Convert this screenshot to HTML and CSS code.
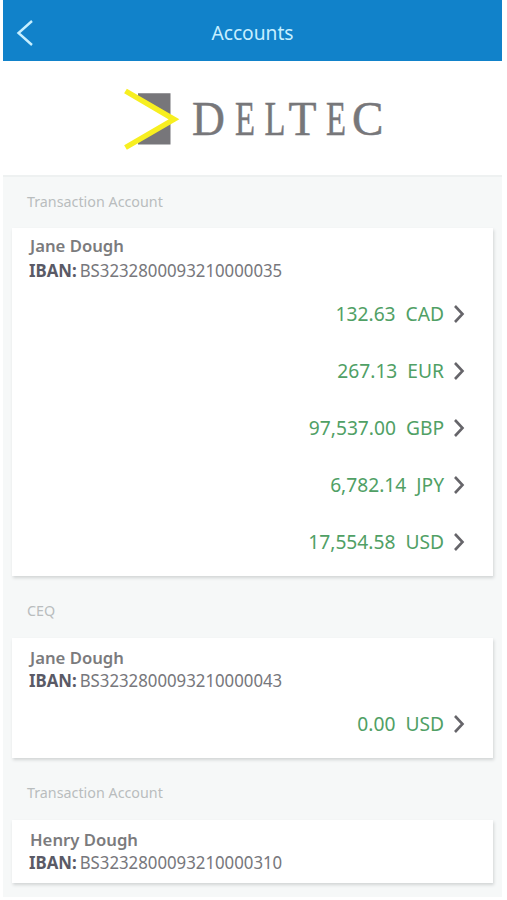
FILE: index.html
```html
<!DOCTYPE html>
<html lang="en">
<head>
<meta charset="utf-8">
<title>Accounts</title>
<link rel="stylesheet" href="styles.css">
</head>
<body>
<div class="app">
  <header class="bar">
    <svg class="back" viewBox="0 0 18 28"><path d="M16 2 2.5 14 16 26"/></svg>
    <h1 class="title">Accounts</h1>
  </header>
  <div class="brand">
    <svg class="logo" width="262" height="64" viewBox="0 0 262 64">
      <path class="mark-box" d="M14 5.3H46.5V29.3L14 10ZM14 56.5H46.5V33.3L14 52Z"/>
      <path class="mark-arrow" d="M1.5 3 50 31.3 1.5 59.5"/>
      <text class="wordmark" y="47.5" transform="scale(.7 1)"><tspan x="97" textLength="47" lengthAdjust="spacingAndGlyphs">D</tspan><tspan x="158.6" textLength="28.6" lengthAdjust="spacingAndGlyphs">E</tspan><tspan x="200.7" textLength="30" lengthAdjust="spacingAndGlyphs">L</tspan><tspan x="235" textLength="40" lengthAdjust="spacingAndGlyphs">T</tspan><tspan x="288.5" textLength="28.6" lengthAdjust="spacingAndGlyphs">E</tspan><tspan x="325.7" textLength="45" lengthAdjust="spacingAndGlyphs">C</tspan></text>
    </svg>
  </div>
  <main class="content">
    <h2 class="group">Transaction Account</h2>
    <section class="card card-first">
      <h3 class="name">Jane Dough</h3>
      <p class="iban"><b>IBAN:</b><span>BS3232800093210000035</span></p>
      <ul class="balances">
        <li><span>132.63</span><span>CAD</span><svg class="chev" viewBox="0 0 12 20"><path d="m2 2 7.5 8L2 18"/></svg></li>
        <li><span>267.13</span><span>EUR</span><svg class="chev" viewBox="0 0 12 20"><path d="m2 2 7.5 8L2 18"/></svg></li>
        <li><span>97,537.00</span><span>GBP</span><svg class="chev" viewBox="0 0 12 20"><path d="m2 2 7.5 8L2 18"/></svg></li>
        <li><span>6,782.14</span><span>JPY</span><svg class="chev" viewBox="0 0 12 20"><path d="m2 2 7.5 8L2 18"/></svg></li>
        <li><span>17,554.58</span><span>USD</span><svg class="chev" viewBox="0 0 12 20"><path d="m2 2 7.5 8L2 18"/></svg></li>
      </ul>
    </section>
    <h2 class="group">CEQ</h2>
    <section class="card">
      <h3 class="name">Jane Dough</h3>
      <p class="iban"><b>IBAN:</b><span>BS3232800093210000043</span></p>
      <ul class="balances">
        <li><span>0.00</span><span>USD</span><svg class="chev" viewBox="0 0 12 20"><path d="m2 2 7.5 8L2 18"/></svg></li>
      </ul>
    </section>
    <h2 class="group">Transaction Account</h2>
    <section class="card">
      <h3 class="name">Henry Dough</h3>
      <p class="iban"><b>IBAN:</b><span>BS3232800093210000310</span></p>
    </section>
  </main>
</div>
</body>
</html>
```
FILE: styles.css
```css
* { box-sizing: border-box; margin: 0; padding: 0; }
body { background: #fff; font-family: "Noto Sans", "Open Sans", sans-serif; }
svg { display: block; fill: none; }
.app { width: 499px; height: 897px; margin-left: 3px; background: #f6f8f8; overflow: hidden; }
.bar { display: grid; grid-template-columns: 60px 1fr 60px; align-items: center; height: 61px; padding-top: 5px; background: #1182ca; }
.back { width: 18px; height: 28px; margin-left: 13px; stroke: #c6efff; stroke-width: 2.4; }
.title { text-align: center; color: #c6efff; font-size: 19.2px; font-weight: 400; line-height: 28px; transform: scaleY(1.07); }
.brand { height: 114px; padding: 27px 0 0 121px; background: #fff; }
.mark-box { fill: #77767a; }
.mark-arrow { stroke: #f7ef20; stroke-width: 5.4; }
.wordmark { fill: #77777a; stroke: #77777a; stroke-width: .5; font-family: "Liberation Serif", serif; font-size: 48.5px; }
.content { padding: 0 9px; border-top: 2px solid #eef1f1; }
.group { height: 62px; padding: 25px 15px 0; color: #b9bdbe; font-size: 14.3px; font-weight: 400; line-height: 20px; }
.content .group:first-child { height: 51px; padding-top: 15px; }
.card { min-height: 63px; padding: 9px 28px 0 17px; background: #fff; box-shadow: 1px 2px 3px #d2d5d6; }
.name { padding-left: 1px; color: #7b7b7d; font-size: 16.7px; font-weight: 600; line-height: 22px; }
.card-first { padding-top: 6px; }
.card-first .name { line-height: 24px; margin-bottom: 1px; }
.iban { display: flex; gap: 3px; color: #77777c; font-size: 16.8px; line-height: 24px; transform: scaleY(1.05); }
.iban b { color: #5a5a66; font-weight: 700; }
.balances { padding: 2px 0 6px; list-style: none; }
.balances li { display: flex; justify-content: flex-end; align-items: center; gap: 10px; height: 57px; color: #50a065; font-size: 19.2px; }
.balances span { transform: translateY(-1px) scaleY(1.07); }
.chev { width: 12px; height: 20px; margin-left: -1px; stroke: #66656a; stroke-width: 2.6; }
```
